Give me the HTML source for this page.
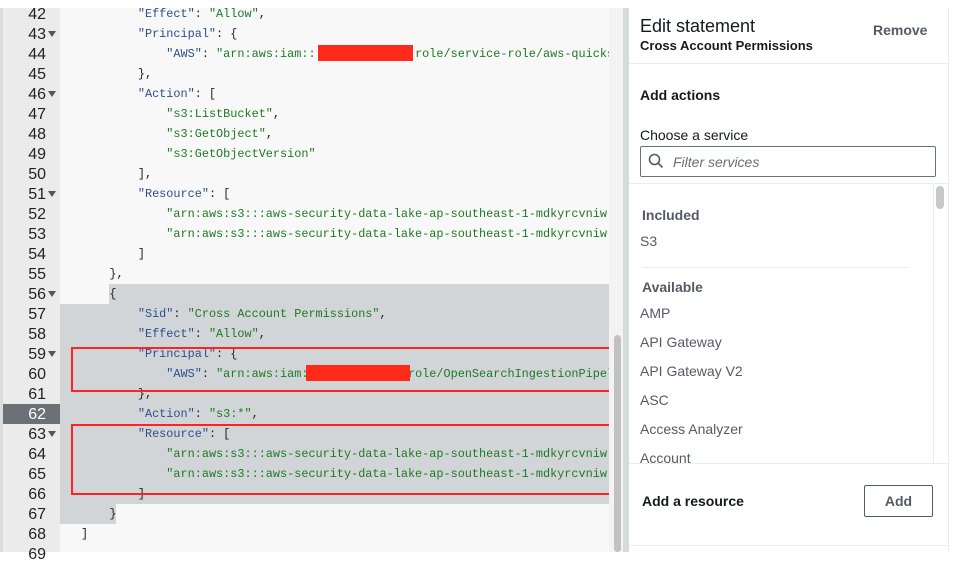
<!DOCTYPE html>
<html><head><meta charset="utf-8"><style>
body{margin:0;width:957px;height:552px;overflow:hidden;background:#fff;position:relative;font-family:"Liberation Sans",sans-serif}
.ed{position:absolute;left:0;top:8px;width:609px;height:544px;background:#f8f8f8;overflow:hidden}
.gut{position:absolute;left:0;top:8px;width:60px;height:544px;background:#ebebeb;border-left:3px solid #dcdcdc;box-sizing:border-box}
.sel{position:absolute;background:#d2d5d8}
.ln{position:absolute;left:0;width:46px;text-align:right;font:16px "Liberation Sans",sans-serif;color:#222;height:20px;line-height:21px}
.tri{position:absolute;left:48px;width:0;height:0;border-left:4px solid transparent;border-right:4px solid transparent;border-top:6px solid #555}
.code{position:absolute;left:81px;white-space:pre;font:11.85px "Liberation Mono",monospace;height:20px;line-height:21px;color:#222}
.k{color:#2b4f8e}.s{color:#1d7a22}
.red{position:absolute;background:#ff2a1a}
.box{position:absolute;border:2px solid #f22;box-sizing:border-box}
.p{position:absolute;white-space:nowrap;color:#16191f}
</style></head><body>
<div class="ed"></div>
<div class="sel" style="left:109px;top:284px;width:500px;height:20px"></div>
<div class="sel" style="left:60px;top:304px;width:549px;height:200px"></div>
<div class="sel" style="left:60px;top:504px;width:56px;height:20px"></div>
<div class="gut"></div>
<div style="position:absolute;left:3px;top:404px;width:57px;height:20px;background:#6b7177"></div>

<div class="ln" style="top:4px">42</div>
<div class="ln" style="top:24px">43</div><div class="tri" style="top:31px"></div>
<div class="ln" style="top:44px">44</div>
<div class="ln" style="top:64px">45</div>
<div class="ln" style="top:84px">46</div><div class="tri" style="top:91px"></div>
<div class="ln" style="top:104px">47</div>
<div class="ln" style="top:124px">48</div>
<div class="ln" style="top:144px">49</div>
<div class="ln" style="top:164px">50</div>
<div class="ln" style="top:184px">51</div><div class="tri" style="top:191px"></div>
<div class="ln" style="top:204px">52</div>
<div class="ln" style="top:224px">53</div>
<div class="ln" style="top:244px">54</div>
<div class="ln" style="top:264px">55</div>
<div class="ln" style="top:284px">56</div><div class="tri" style="top:291px"></div>
<div class="ln" style="top:304px">57</div>
<div class="ln" style="top:324px">58</div>
<div class="ln" style="top:344px">59</div><div class="tri" style="top:351px"></div>
<div class="ln" style="top:364px">60</div>
<div class="ln" style="top:384px">61</div>
<div class="ln" style="top:404px;color:#fff">62</div>
<div class="ln" style="top:424px">63</div><div class="tri" style="top:431px"></div>
<div class="ln" style="top:444px">64</div>
<div class="ln" style="top:464px">65</div>
<div class="ln" style="top:484px">66</div>
<div class="ln" style="top:504px">67</div>
<div class="ln" style="top:524px">68</div>
<div class="ln" style="top:544px">69</div>

<div style="position:absolute;left:0;top:0;width:609px;height:552px;overflow:hidden">
<div class="code" style="top:4px">        <span class="k">"Effect"</span>: <span class="s">"Allow"</span>,</div>
<div class="code" style="top:24px">        <span class="k">"Principal"</span>: {</div>
<div class="code" style="top:44px">            <span class="k">"AWS"</span>: <span class="s">"arn:aws:iam::              role/service-role/aws-quicksight</span></div>
<div class="code" style="top:64px">        },</div>
<div class="code" style="top:84px">        <span class="k">"Action"</span>: [</div>
<div class="code" style="top:104px">            <span class="s">"s3:ListBucket"</span>,</div>
<div class="code" style="top:124px">            <span class="s">"s3:GetObject"</span>,</div>
<div class="code" style="top:144px">            <span class="s">"s3:GetObjectVersion"</span></div>
<div class="code" style="top:164px">        ],</div>
<div class="code" style="top:184px">        <span class="k">"Resource"</span>: [</div>
<div class="code" style="top:204px">            <span class="s">"arn:aws:s3:::aws-security-data-lake-ap-southeast-1-mdkyrcvniw</span></div>
<div class="code" style="top:224px">            <span class="s">"arn:aws:s3:::aws-security-data-lake-ap-southeast-1-mdkyrcvniw</span></div>
<div class="code" style="top:244px">        ]</div>
<div class="code" style="top:264px">    },</div>
<div class="code" style="top:284px">    {</div>
<div class="code" style="top:304px">        <span class="k">"Sid"</span>: <span class="s">"Cross Account Permissions"</span>,</div>
<div class="code" style="top:324px">        <span class="k">"Effect"</span>: <span class="s">"Allow"</span>,</div>
<div class="code" style="top:344px">        <span class="k">"Principal"</span>: {</div>
<div class="code" style="top:364px">            <span class="k">"AWS"</span>: <span class="s">"arn:aws:iam:              role/OpenSearchIngestionPipeline</span></div>
<div class="code" style="top:384px">        },</div>
<div class="code" style="top:404px">        <span class="k">"Action"</span>: <span class="s">"s3:*"</span>,</div>
<div class="code" style="top:424px">        <span class="k">"Resource"</span>: [</div>
<div class="code" style="top:444px">            <span class="s">"arn:aws:s3:::aws-security-data-lake-ap-southeast-1-mdkyrcvniw</span></div>
<div class="code" style="top:464px">            <span class="s">"arn:aws:s3:::aws-security-data-lake-ap-southeast-1-mdkyrcvniw</span></div>
<div class="code" style="top:484px">        ]</div>
<div class="code" style="top:504px">    }</div>
<div class="code" style="top:524px">]</div>
</div>
<div class="red" style="left:318px;top:45px;width:95px;height:16px"></div>
<div class="red" style="left:306px;top:365px;width:104px;height:16px"></div>
<div class="box" style="left:71px;top:347px;width:541px;height:45px"></div>
<div class="box" style="left:71px;top:424px;width:541px;height:71px"></div>

<div style="position:absolute;left:609px;top:8px;width:14px;height:544px;background:#f3f3f3"></div>
<div style="position:absolute;left:614px;top:335px;width:7px;height:217px;background:#c1c1c1;border-radius:4px"></div>
<div style="position:absolute;left:623px;top:8px;width:6px;height:544px;background:#d5dbdb"></div>
<div style="position:absolute;left:629px;top:8px;width:319px;height:544px;background:#fff;border-right:1px solid #eaeded"></div>

<div class="p" style="left:640px;top:16px;font-size:18px">Edit statement</div>
<div class="p" style="left:640px;top:38px;font-size:13px;font-weight:bold">Cross Account Permissions</div>
<div class="p" style="left:873px;top:22px;font-size:14px;font-weight:bold;color:#545b64">Remove</div>
<div style="position:absolute;left:629px;top:63px;width:319px;height:1px;background:#eaeded"></div>
<div class="p" style="left:640px;top:87px;font-size:14px;font-weight:bold">Add actions</div>
<div class="p" style="left:640px;top:127px;font-size:14px">Choose a service</div>
<div style="position:absolute;left:640px;top:146px;width:296px;height:31px;border:1px solid #687078;border-radius:2px;box-sizing:border-box"></div>
<svg style="position:absolute;left:648px;top:153px" width="16" height="16" viewBox="0 0 16 16"><circle cx="6.5" cy="6.5" r="5" fill="none" stroke="#545b64" stroke-width="1.6"/><path d="M10 10l4.5 4.5" stroke="#545b64" stroke-width="1.6"/></svg>
<div class="p" style="left:673px;top:154px;font-size:14px;font-style:italic;color:#687078">Filter services</div>
<div style="position:absolute;left:629px;top:183px;width:319px;height:1px;background:#eaeded"></div>
<div style="position:absolute;left:933px;top:184px;width:1px;height:279px;background:#eaeded"></div>
<div style="position:absolute;left:936px;top:186px;width:8px;height:23px;background:#c8c8c8;border-radius:4px"></div>
<div class="p" style="left:642px;top:207px;font-size:14px;font-weight:bold;color:#545b64">Included</div>
<div class="p" style="left:640px;top:233px;font-size:14px;color:#545b64">S3</div>
<div style="position:absolute;left:642px;top:267px;width:267px;height:1px;background:#eaeded"></div>
<div class="p" style="left:642px;top:279px;font-size:14px;font-weight:bold;color:#545b64">Available</div>
<div class="p" style="left:640px;top:305px;font-size:14px;color:#545b64">AMP</div>
<div class="p" style="left:640px;top:334px;font-size:14px;color:#545b64">API Gateway</div>
<div class="p" style="left:640px;top:363px;font-size:14px;color:#545b64">API Gateway V2</div>
<div class="p" style="left:640px;top:392px;font-size:14px;color:#545b64">ASC</div>
<div class="p" style="left:640px;top:421px;font-size:14px;color:#545b64">Access Analyzer</div>
<div style="position:absolute;left:629px;top:446px;width:300px;height:17px;overflow:hidden"><div class="p" style="left:11px;top:4px;font-size:14px;color:#545b64">Account</div></div>
<div style="position:absolute;left:629px;top:463px;width:319px;height:1px;background:#eaeded"></div>
<div class="p" style="left:642px;top:493px;font-size:14px;font-weight:bold">Add a resource</div>
<div style="position:absolute;left:864px;top:485px;width:69px;height:32px;border:1px solid #545b64;border-radius:2px;box-sizing:border-box;font-size:14px;font-weight:bold;color:#545b64;text-align:center;line-height:30px">Add</div>
<div style="position:absolute;left:629px;top:545px;width:319px;height:1px;background:#eaeded"></div>
</body></html>
